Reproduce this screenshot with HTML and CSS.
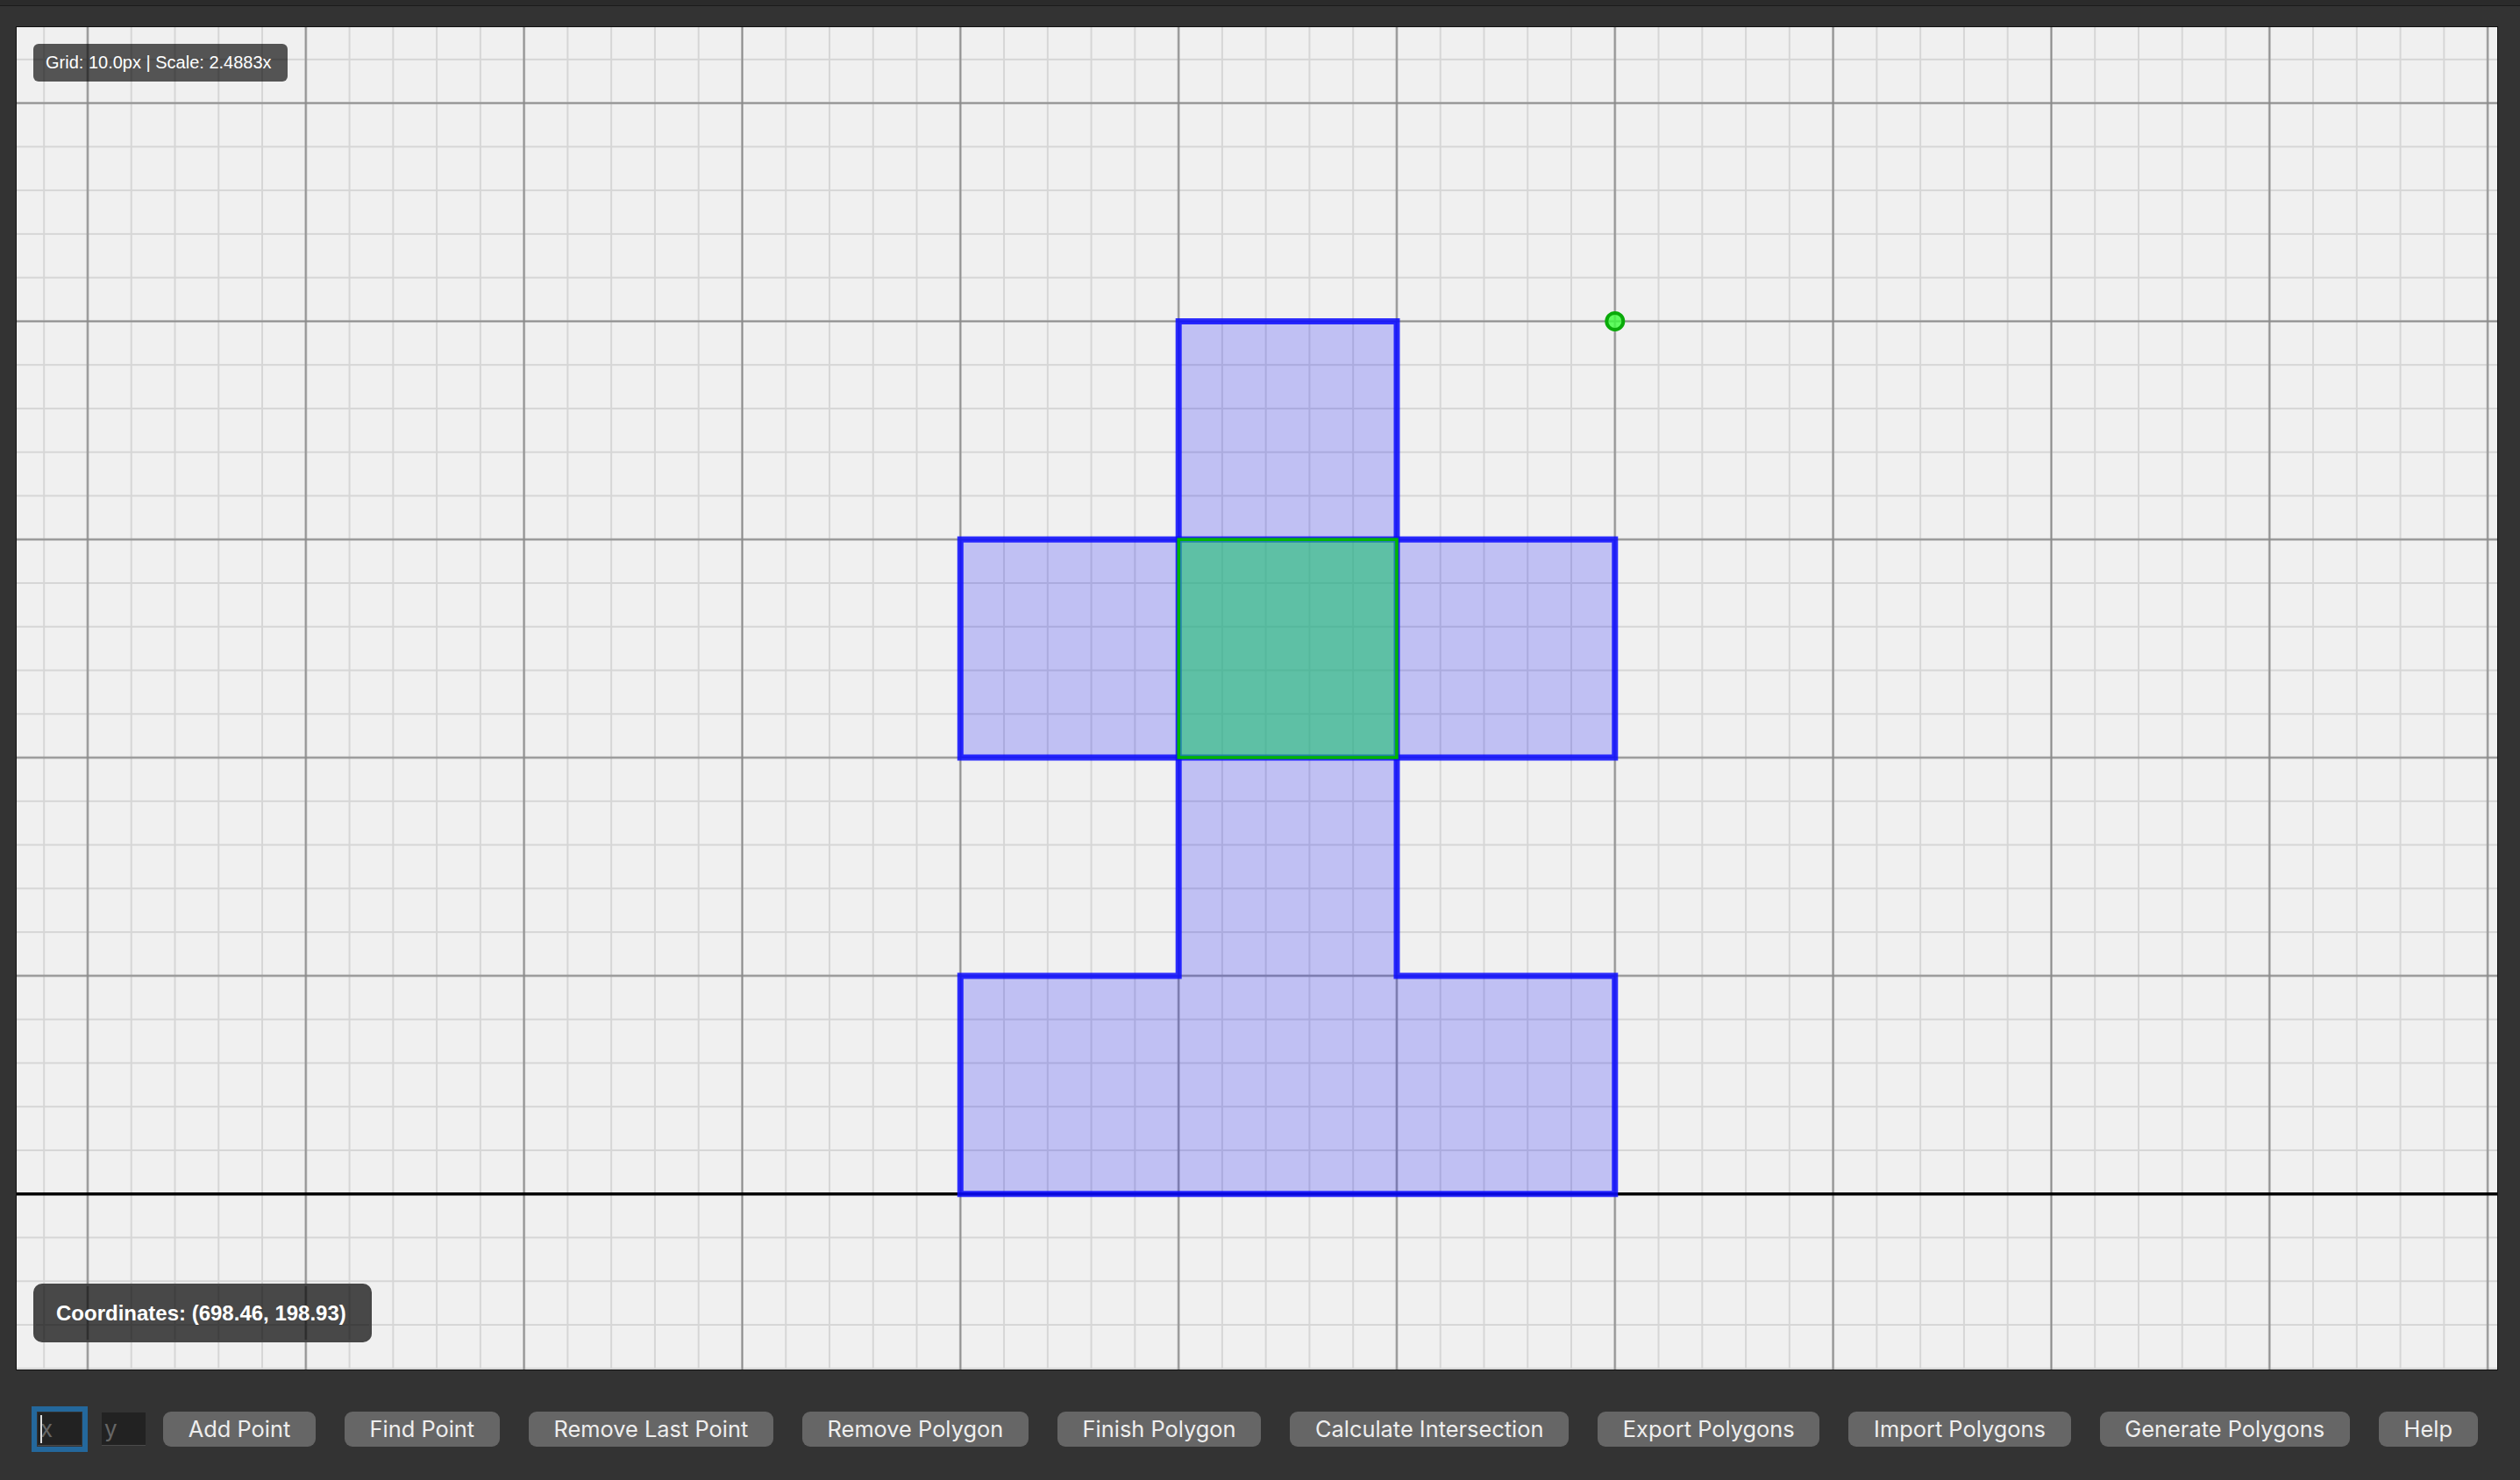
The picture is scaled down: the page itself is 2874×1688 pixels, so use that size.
FILE: index.html
```html
<!DOCTYPE html>
<html lang="en">
<head>
<meta charset="utf-8">
<title>Polygon Editor</title>
<link rel="stylesheet" href="styles.css">
</head>
<body>
<div class="titlebar"></div>
<main class="app">
  <div class="canvas-wrap">
    <svg class="plane" width="2829" height="1531" viewBox="0 0 2829 1531" xmlns="http://www.w3.org/2000/svg">
      <defs>
        <pattern id="minor" patternUnits="userSpaceOnUse" x="6.32" y="11.92" width="49.766" height="49.766">
          <path d="M24.883 0V49.766M0 24.883H49.766" stroke="#d6d6d6" stroke-width="2" fill="none"/>
        </pattern>
        <pattern id="major" patternUnits="userSpaceOnUse" x="-43.42" y="-37.82" width="248.83" height="248.83">
          <path d="M124.415 0V248.83M0 124.415H248.83" stroke="#8a8a8a" stroke-width="2" fill="none"/>
        </pattern>
      </defs>
      <rect width="2829" height="1531" fill="#f0f0f0"/>
      <rect width="2829" height="1531" fill="url(#minor)"/>
      <rect width="2829" height="1531" fill="url(#major)"/>
      <line x1="0" y1="1330.7" x2="2829" y2="1330.7" stroke="#000" stroke-width="3.5"/>
      <polygon points="1325.2,335.4 1574,335.4 1574,1081.9 1822.8,1081.9 1822.8,1330.7 1076.3,1330.7 1076.3,1081.9 1325.2,1081.9"
        fill="rgba(0,0,255,0.2)" stroke="rgba(10,10,255,0.85)" stroke-width="7" stroke-linejoin="miter"/>
      <polygon points="1076.3,584.2 1822.8,584.2 1822.8,833 1076.3,833"
        fill="rgba(0,0,255,0.2)" stroke="rgba(10,10,255,0.85)" stroke-width="7" stroke-linejoin="miter"/>
      <polygon points="1325.2,584.2 1574,584.2 1574,833 1325.2,833"
        fill="rgba(36,232,85,0.5)" stroke="#00b400" stroke-width="3.5"/>
      <circle cx="1822.8" cy="335.4" r="9.5" fill="rgba(60,255,60,0.8)" stroke="#0aaa0a" stroke-width="4"/>
    </svg>
    <div class="grid-info">Grid: 10.0px | Scale: 2.4883x</div>
    <div class="coords">Coordinates: (698.46, 198.93)</div>
  </div>
  <div class="toolbar">
    <span class="field focused"><input class="coord-input" type="text" placeholder="x"><span class="caret"></span></span>
    <input class="coord-input y-input" type="text" placeholder="y">
    <button class="btn first">Add Point</button>
    <button class="btn">Find Point</button>
    <button class="btn">Remove Last Point</button>
    <button class="btn">Remove Polygon</button>
    <button class="btn">Finish Polygon</button>
    <button class="btn">Calculate Intersection</button>
    <button class="btn">Export Polygons</button>
    <button class="btn">Import Polygons</button>
    <button class="btn">Generate Polygons</button>
    <button class="btn">Help</button>
  </div>
</main>
</body>
</html>
```

FILE: styles.css
```css
html, body {
  margin: 0;
  padding: 0;
  height: 100%;
  background: #333333;
  overflow: hidden;
}

.titlebar {
  height: 6px;
  background: #2b2b2b;
  border-bottom: 1px solid #1b1b1b;
}

.app {
  padding: 23px 0 0 18px;
}

.canvas-wrap {
  position: relative;
  width: 2829px;
  height: 1531px;
  border: 1px solid #111111;
  background: #f0f0f0;
}

.plane {
  display: block;
}

.grid-info {
  position: absolute;
  left: 19px;
  top: 19px;
  height: 43px;
  line-height: 43px;
  padding: 0 18px 0 14px;
  background: rgba(0, 0, 0, 0.65);
  color: #ffffff;
  font-family: "Liberation Sans", Arial, sans-serif;
  font-size: 20px;
  border-radius: 6px;
  white-space: nowrap;
}

.coords {
  position: absolute;
  left: 19px;
  bottom: 31px;
  height: 61px;
  line-height: 61px;
  padding: 0 26px 0 23px;
  background: rgba(0, 0, 0, 0.7);
  border: 3px solid rgba(70, 70, 70, 0.85);
  border-radius: 10px;
  color: #ffffff;
  font-family: "Liberation Sans", Arial, sans-serif;
  font-weight: bold;
  font-size: 24px;
  white-space: nowrap;
}

.toolbar {
  display: flex;
  align-items: center;
  height: 40px;
  margin-top: 47px;
  padding-left: 25px;
}

.field {
  position: relative;
  display: inline-flex;
}

.coord-input {
  box-sizing: border-box;
  width: 50px;
  height: 38px;
  margin: 0;
  padding: 0 3px;
  border: none;
  border-bottom: 1px solid #4a4a4a;
  background: #222222;
  color: #dddddd;
  font-family: Inter, "Noto Sans", sans-serif;
  font-size: 26px;
  outline: none;
}

.coord-input::placeholder {
  color: #666666;
}

.focused .coord-input {
  outline: 6px solid #24689c;
  outline-offset: 1px;
}

.caret {
  position: absolute;
  left: 3px;
  top: 3px;
  width: 2px;
  height: 32px;
  background: #dddddd;
}

.y-input {
  margin-left: 23px;
}

.btn {
  height: 40px;
  margin: 0 0 0 33px;
  padding: 0 28.7px;
  border: none;
  border-radius: 9px;
  background: #666666;
  color: #eeeeee;
  font-family: Inter, "Noto Sans", sans-serif;
  font-size: 25.4px;
  line-height: 40px;
  white-space: nowrap;
}

.btn.first {
  margin-left: 20px;
}
```
